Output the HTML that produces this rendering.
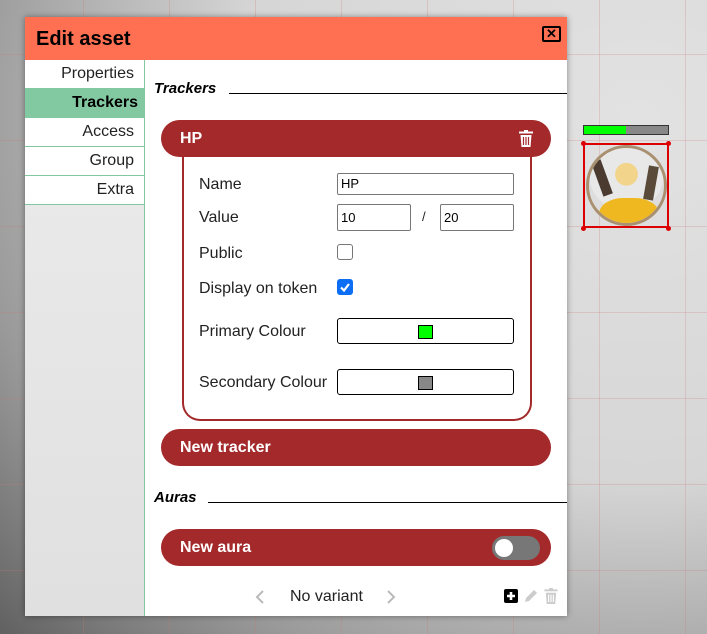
<!DOCTYPE html>
<html><head><style>
*{box-sizing:border-box;margin:0;padding:0}
body{width:707px;height:634px;overflow:hidden;position:relative;font-family:"Liberation Sans",Arial,sans-serif;
background:radial-gradient(ellipse 900px 800px at 640px 120px,#e2e2e2 0%,#d6d6d6 45%,#9a9a9a 75%,#555 100%);}
.grid{position:absolute;inset:0;background-image:linear-gradient(to right,rgba(200,120,120,.25) 1px,transparent 1px),linear-gradient(to bottom,rgba(200,120,120,.25) 1px,transparent 1px);background-size:86px 86px;background-position:-3px -32px}
.dlg{position:absolute;left:25px;top:17px;width:542px;height:599px;background:#fff;box-shadow:0 0 6px rgba(0,0,0,.4)}
.hdr{height:43px;background:#ff7052;position:relative}
.hdr h1{position:absolute;left:11px;top:11px;font-size:20px;font-weight:bold;color:#000}
.close{position:absolute;right:6px;top:9px;width:19px;height:16px;border:2px solid #000;border-radius:2px;font-size:13px;font-weight:bold;line-height:12px;text-align:center}
.side{position:absolute;left:0;top:43px;width:120px;bottom:0;background:linear-gradient(#ececec,#e0e0e0);border-right:1px solid #82c8a0}
.side div{height:29px;background:#fff;border-bottom:1px solid #82c8a0;text-align:right;padding-right:10px;font-size:16px;line-height:27px;color:#222}
.side div.act{background:#82c8a0;font-weight:bold;color:#000;padding-right:6px}
.sec{position:absolute;font-style:italic;font-weight:bold;font-size:15px}
.line{position:absolute;height:1px;background:#000;right:0}
.bar{position:absolute;left:136px;width:390px;height:37px;border-radius:19px;background:#a3292b;color:#fff;font-weight:bold;font-size:16px;line-height:37px;padding-left:19px}
.box{position:absolute;left:157px;top:139px;width:350px;height:265px;border:2px solid #a3292b;border-top:none;border-radius:0 0 18px 18px}
.lbl{position:absolute;font-size:16px;color:#222}
.inp{position:absolute;border:1px solid #777;border-radius:2px;font-size:13px;padding-left:3px;line-height:20px;background:#fff}
.cb{position:absolute;width:16px;height:16px;border:1px solid #767676;border-radius:3px}
.cbc{background:#0b6ef4;border-color:#0b6ef4}
.colb{position:absolute;width:177px;height:26px;border:1px solid #000;border-radius:3px}
.sw{position:absolute;left:80px;top:6px;width:15px;height:14px;border:1px solid #000}
</style></head><body>
<div class="grid"></div>
<div class="dlg">
 <div class="hdr"><h1>Edit asset</h1><div class="close">✕</div></div>
 <div class="side"><div>Properties</div><div class="act">Trackers</div><div>Access</div><div>Group</div><div>Extra</div></div>
 <div class="sec" style="left:129px;top:63px">Trackers</div><div class="line" style="left:204px;top:76px"></div>
 <div class="bar" style="top:103px">HP
  <svg style="position:absolute;right:18px;top:10px" width="14" height="17" viewBox="0 0 14 17"><rect x="0" y="1.5" width="14" height="2" fill="#fff"/><rect x="5" y="0" width="4" height="2" fill="#fff"/><path d="M1.5 5h11l-1 12h-9z" fill="#fff"/><path d="M4.5 7v8M7 7v8M9.5 7v8" stroke="#a3292b" stroke-width="1.2"/></svg>
 </div>
 <div class="box"></div>
 <div class="lbl" style="left:174px;top:159px">Name</div>
 <div class="inp" style="left:312px;top:156px;width:177px;height:22px">HP</div>
 <div class="lbl" style="left:174px;top:192px">Value</div>
 <div class="inp" style="left:312px;top:187px;width:74px;height:27px;line-height:26px">10</div>
 <div class="lbl" style="left:397px;top:192px;font-size:13px">/</div>
 <div class="inp" style="left:415px;top:187px;width:74px;height:27px;line-height:26px">20</div>
 <div class="lbl" style="left:174px;top:228px">Public</div>
 <div class="cb" style="left:312px;top:227px"></div>
 <div class="lbl" style="left:174px;top:263px">Display on token</div>
 <div class="cb cbc" style="left:312px;top:262px"><svg width="14" height="14" viewBox="0 0 14 14" style="position:absolute;left:0;top:0"><path d="M3 7.5l3 3 5-6.5" stroke="#fff" stroke-width="2.2" fill="none"/></svg></div>
 <div class="lbl" style="left:174px;top:306px">Primary Colour</div>
 <div class="colb" style="left:312px;top:301px"><div class="sw" style="background:#00ff00"></div></div>
 <div class="lbl" style="left:174px;top:357px">Secondary Colour</div>
 <div class="colb" style="left:312px;top:352px"><div class="sw" style="background:#888"></div></div>
 <div class="bar" style="top:412px">New tracker</div>
 <div class="sec" style="left:129px;top:472px">Auras</div><div class="line" style="left:183px;top:485px"></div>
 <div class="bar" style="top:512px">New aura
  <div style="position:absolute;left:331px;top:7px;width:48px;height:24px;border-radius:12px;background:#777"><div style="position:absolute;left:3px;top:3px;width:18px;height:18px;border-radius:50%;background:#fff"></div></div>
 </div>
 <svg style="position:absolute;left:230px;top:573px" width="10" height="14" viewBox="0 0 10 14"><path d="M8 1L2 7l6 6" stroke="#bbb" stroke-width="2" fill="none"/></svg>
 <div class="lbl" style="left:265px;top:571px">No variant</div>
 <svg style="position:absolute;left:361px;top:573px" width="10" height="14" viewBox="0 0 10 14"><path d="M2 1l6 6-6 6" stroke="#bbb" stroke-width="2" fill="none"/></svg>
 <svg style="position:absolute;left:479px;top:572px" width="14" height="14" viewBox="0 0 14 14"><rect width="14" height="14" rx="2" fill="#000"/><path d="M7 3v8M3 7h8" stroke="#fff" stroke-width="2.6"/></svg>
 <svg style="position:absolute;left:498px;top:571px" width="16" height="16" viewBox="0 0 16 16"><path d="M2 14l1-4 8-8 3 3-8 8z" fill="#ccc"/></svg>
 <svg style="position:absolute;left:519px;top:571px" width="14" height="16" viewBox="0 0 14 17"><rect x="0" y="1.5" width="14" height="2" fill="#ccc"/><rect x="5" y="0" width="4" height="2" fill="#ccc"/><path d="M1.5 5h11l-1 12h-9z" fill="#ccc"/><path d="M4.5 7v8M7 7v8M9.5 7v8" stroke="#fff" stroke-width="1.2"/></svg>
</div>
<div style="position:absolute;left:583px;top:125px;width:86px;height:10px;border:1px solid #333;background:linear-gradient(to right,#0f0 50%,#888 50%)"></div>
<div style="position:absolute;left:583px;top:143px;width:86px;height:85px;border:2px solid #d00"></div>
<div style="position:absolute;left:581px;top:141px;width:5px;height:5px;border-radius:50%;background:#d00"></div>
<div style="position:absolute;left:666px;top:141px;width:5px;height:5px;border-radius:50%;background:#d00"></div>
<div style="position:absolute;left:581px;top:226px;width:5px;height:5px;border-radius:50%;background:#d00"></div>
<div style="position:absolute;left:666px;top:226px;width:5px;height:5px;border-radius:50%;background:#d00"></div>
<div style="position:absolute;left:586px;top:145px;width:81px;height:81px;border-radius:50%;border:3px solid #a89070;background:radial-gradient(circle at 50% 35%,#f2d48a 0 18%,#e8e8e8 19% 60%,#ddd 61%);overflow:hidden">
 <div style="position:absolute;left:10px;top:50px;width:60px;height:40px;border-radius:40% 40% 0 0;background:#f0b820"></div>
 <div style="position:absolute;left:8px;top:12px;width:10px;height:36px;background:#4a3a30;transform:rotate(-20deg)"></div>
 <div style="position:absolute;right:8px;top:18px;width:10px;height:34px;background:#5a4a3a;transform:rotate(10deg)"></div>
</div>
</body></html>
